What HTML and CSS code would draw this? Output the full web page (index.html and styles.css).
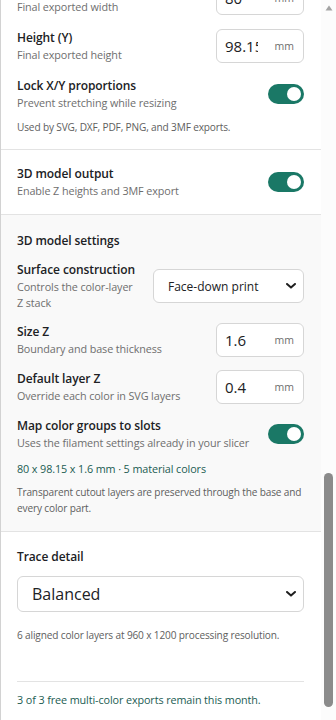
FILE: index.html
```html
<!DOCTYPE html>
<html lang="en">
<head>
  <meta charset="UTF-8">
  <meta name="viewport" content="width=device-width, initial-scale=1.0">
  <title>Export settings</title>
  <link rel="stylesheet" href="styles.css">
</head>
<body>
  <div class="panel">
    <div class="scroller">
      <div class="content">

        <section class="group">
          <div class="row">
            <div class="label">
              <div class="title">Width (X)</div>
              <div class="desc">Final exported width</div>
            </div>
            <label class="num">
              <input type="text" value="80">
              <span class="unit">mm</span>
            </label>
          </div>
          <div class="row">
            <div class="label">
              <div class="title">Height (Y)</div>
              <div class="desc">Final exported height</div>
            </div>
            <label class="num">
              <input type="text" value="98.15">
              <span class="unit">mm</span>
            </label>
          </div>
          <div class="row">
            <div class="label">
              <div class="title">Lock X/Y proportions</div>
              <div class="desc">Prevent stretching while resizing</div>
            </div>
            <span class="toggle on"><span class="knob"></span></span>
          </div>
          <p class="note tight">Used by SVG, DXF, PDF, PNG, and 3MF exports.</p>
        </section>

        <section class="group single">
          <div class="row">
            <div class="label">
              <div class="title">3D model output</div>
              <div class="desc">Enable Z heights and 3MF export</div>
            </div>
            <span class="toggle on"><span class="knob"></span></span>
          </div>
        </section>

        <section class="group settings">
          <h3 class="heading">3D model settings</h3>
          <div class="row">
            <div class="label">
              <div class="title">Surface construction</div>
              <div class="desc">Controls the color-layer Z stack</div>
            </div>
            <div class="select-wrap small">
              <select>
                <option>Face-down print</option>
                <option>Face-up print</option>
              </select>
              <svg class="chev" width="10" height="6" viewBox="0 0 10 6"><path d="M1 1l4 3.6L9 1" fill="none" stroke="#1f1f1f" stroke-width="2" stroke-linecap="round" stroke-linejoin="round"/></svg>
            </div>
          </div>
          <div class="row">
            <div class="label">
              <div class="title">Size Z</div>
              <div class="desc">Boundary and base thickness</div>
            </div>
            <label class="num">
              <input type="text" value="1.6">
              <span class="unit">mm</span>
            </label>
          </div>
          <div class="row spaced">
            <div class="label">
              <div class="title">Default layer Z</div>
              <div class="desc">Override each color in SVG layers</div>
            </div>
            <label class="num">
              <input type="text" value="0.4">
              <span class="unit">mm</span>
            </label>
          </div>
          <div class="row spaced">
            <div class="label">
              <div class="title">Map color groups to slots</div>
              <div class="desc">Uses the filament settings already in your slicer</div>
            </div>
            <span class="toggle on"><span class="knob"></span></span>
          </div>
          <p class="summary">80 x 98.15 x 1.6 mm · 5 material colors</p>
          <p class="note tight">Transparent cutout layers are preserved through the base and every color part.</p>
        </section>

        <section class="group trace">
          <h3 class="heading">Trace detail</h3>
          <div class="select-wrap large">
            <select>
              <option>Balanced</option>
              <option>Fine</option>
              <option>Coarse</option>
            </select>
            <svg class="chev" width="10" height="6" viewBox="0 0 10 6"><path d="M1 1l4 3.6L9 1" fill="none" stroke="#1f1f1f" stroke-width="2" stroke-linecap="round" stroke-linejoin="round"/></svg>
          </div>
          <p class="note">6 aligned color layers at 960 x 1200 processing resolution.</p>
          <p class="quota">3 of 3 free multi-color exports remain this month.</p>
        </section>

      </div>
    </div>

    <div class="scrollbar">
      <svg class="arrow" width="8" height="6" viewBox="0 0 8 6"><path d="M4 0.5L7.5 5.5H0.5Z" fill="#a3a3a3"/></svg>
      <div class="thumb"></div>
    </div>
  </div>
</body>
</html>
```

FILE: styles.css
```css
body {
  margin: 0;
  font-family: "Open Sans", "Noto Sans", sans-serif;
  color: #202124;
  background: #fff;
}
.panel {
  display: flex;
  height: 720px;
  border-left: 1px solid #d2d2d2;
  overflow: hidden;
}
.scroller {
  flex: 1;
  overflow: hidden;
}
.content {
  margin-top: -34px;
}
.group {
  display: flex;
  flex-direction: column;
  gap: 14px;
  padding: 15px 17px 14px 16px;
  border-bottom: 1px solid #e3e3e3;
}
.group.single {
  padding: 15px 17px 15px 16px;
}
.settings {
  background: #f9f9f9;
  gap: 12px;
  padding: 17px 17px 15px 16px;
}
.trace {
  border-bottom: none;
  padding: 16px 17px 0 16px;
  gap: 11px;
}
.row {
  display: flex;
  align-items: center;
  gap: 12px;
}
.row.spaced {
  margin-top: 1px;
}
.label {
  flex: 1;
  min-width: 0;
}
.title,
.heading {
  font-size: 12px;
  font-weight: 600;
  line-height: 17px;
  letter-spacing: -0.1px;
  margin: 0;
  color: #202124;
}
.desc {
  font-size: 10.8px;
  line-height: 16px;
  letter-spacing: -0.1px;
  color: #6e6e6e;
  margin-top: 1px;
}
p {
  margin: 0;
}
.note {
  font-size: 10.1px;
  line-height: 16px;
  letter-spacing: -0.15px;
  color: #5e5e5e;
}
.note.tight {
  margin-top: -6px;
}
.settings .note.tight {
  margin-top: -5px;
}
.summary {
  font-size: 10.8px;
  line-height: 16px;
  letter-spacing: -0.1px;
  color: #1b5c52;
  margin-top: -2px;
}
.trace .note {
  margin-top: 4px;
}
.quota {
  margin-top: 27px;
  border-top: 1px solid #e3e3e3;
  padding-top: 10px;
  font-size: 10.8px;
  line-height: 16px;
  letter-spacing: -0.1px;
  color: #1b5c52;
}

/* number field with unit */
.num {
  display: flex;
  align-items: center;
  box-sizing: border-box;
  width: 88px;
  height: 34px;
  padding: 0 9px 0 8px;
  border: 1px solid #d6d6d6;
  border-radius: 6px;
  background: #fff;
}
.num input {
  width: 33px;
  border: none;
  outline: none;
  padding: 0;
  font-family: inherit;
  font-size: 15px;
  color: #202124;
  background: transparent;
}
.num .unit {
  margin-left: auto;
  font-size: 10.5px;
  color: #6e6e6e;
}

/* selects */
.select-wrap {
  position: relative;
}
.select-wrap select {
  appearance: none;
  -webkit-appearance: none;
  box-sizing: border-box;
  width: 100%;
  border: 1px solid #d6d6d6;
  border-radius: 6px;
  background: #fff;
  font-family: inherit;
  color: #202124;
  outline: none;
}
.select-wrap .chev {
  position: absolute;
  right: 8px;
  top: 50%;
  margin-top: -3px;
  pointer-events: none;
}
.select-wrap.small {
  width: 151px;
}
.select-wrap.small select {
  height: 34px;
  padding: 0 24px 0 14px;
  font-size: 12px;
}
.select-wrap.large select {
  height: 36px;
  padding: 0 24px 0 14px;
  font-size: 16px;
}

/* toggle */
.toggle {
  display: flex;
  align-items: center;
  box-sizing: border-box;
  width: 36px;
  height: 20px;
  padding: 3px;
  border-radius: 10px;
  background: #c8c8c8;
}
.toggle.on {
  background: #1a7866;
  justify-content: flex-end;
}
.toggle .knob {
  width: 14px;
  height: 14px;
  border-radius: 50%;
  background: #fff;
}

/* scrollbar */
.scrollbar {
  display: flex;
  flex-direction: column;
  align-items: center;
  width: 15px;
  background: #fcfcfc;
}
.scrollbar .arrow {
  margin-top: 5px;
}
.scrollbar .thumb {
  width: 9px;
  height: 234px;
  margin-top: 462px;
  border-radius: 5px;
  background: #8b8b8b;
}
```
